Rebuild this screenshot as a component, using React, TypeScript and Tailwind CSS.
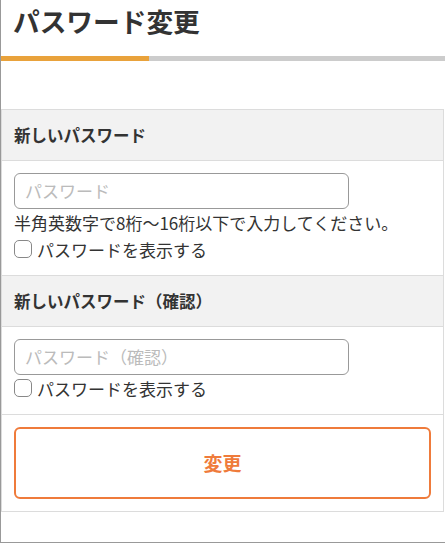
import React from "react";

const font = { fontFamily: '"Noto Sans CJK JP", "Noto Sans", sans-serif' };

function Checkbox({ label }: { label: string }) {
  return (
    <label className="flex h-[26px] items-center gap-[5px] text-[17px] text-[#333]">
      <span className="h-[18px] w-[18px] rounded-[5px] border border-[#888] bg-white" />
      <span className="leading-none">{label}</span>
    </label>
  );
}

function Section({ title, placeholder, hint }: { title: string; placeholder: string; hint?: string }) {
  return (
    <>
      <div className="flex h-[51px] items-center border-b border-[#dcdcdc] bg-[#f2f2f2] px-[12px] text-[16.5px] font-bold text-[#333]">
        {title}
      </div>
      <div className="border-b border-[#dcdcdc] px-[12px] pb-[13px] pt-[12px]">
        <div className="flex h-[36px] w-[335px] items-center rounded-[6px] border border-[#999] px-[10px] text-[17px] text-[#bbb]">
          {placeholder}
        </div>
        {hint && <div className="text-[17px] leading-[27px] text-[#333]">{hint}</div>}
        <Checkbox label="パスワードを表示する" />
      </div>
    </>
  );
}

export default function App() {
  return (
    <div style={font} className="h-[543px] w-[445px] overflow-hidden border-b border-l border-[#999] bg-white">
      <h1 className="px-[12px] pt-[6px] text-[26.7px] font-bold leading-[30px] text-[#333]">パスワード変更</h1>
      <div className="mt-[20px] flex h-[5px] w-full bg-[#cccccc]">
        <div className="h-full w-[148px] bg-[#e9a23b]" />
      </div>
      <div className="mt-[48px] mr-[1px] border-x border-t border-[#dcdcdc]">
        <Section title="新しいパスワード" placeholder="パスワード" hint="半角英数字で8桁〜16桁以下で入力してください。" />
        <Section title="新しいパスワード（確認）" placeholder="パスワード（確認）" />
        <div className="border-b border-[#dcdcdc] px-[12px] py-[12px]">
          <button className="flex h-[72px] w-full items-center justify-center rounded-[6px] border-2 border-[#ef7b3b] bg-white text-[19px] font-bold text-[#ef7b3b]">
            変更
          </button>
        </div>
      </div>
    </div>
  );
}
